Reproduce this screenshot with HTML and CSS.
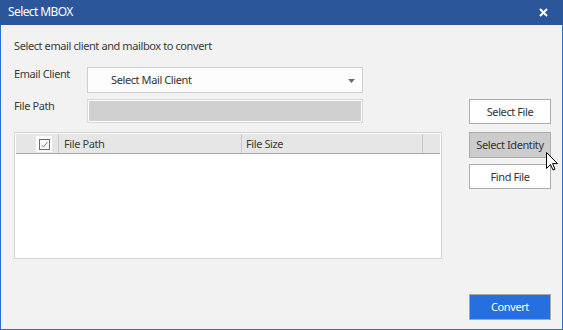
FILE: index.html
```html
<!DOCTYPE html>
<html>
<head>
<meta charset="utf-8">
<link rel="stylesheet" href="styles.css">
</head>
<body>
<div class="win">
  <div class="titlebar">
    <span class="title">Select MBOX</span>
    <svg class="close" width="9" height="9" viewBox="0 0 9 9"><path d="M1 1 L8 8 M8 1 L1 8" stroke="#fff" stroke-width="2" fill="none"/></svg>
  </div>
  <div class="content">
    <div class="left">
      <div class="intro">Select email client and mailbox to convert</div>
      <div class="row row-client">
        <div class="label">Email Client</div>
        <div class="combo">
          <span class="combo-text">Select Mail Client</span>
          <svg class="arrow" width="7" height="4" viewBox="0 0 7 4"><path d="M0 0 H7 L3.5 4 Z" fill="#6d6d6d"/></svg>
        </div>
      </div>
      <div class="row row-path">
        <div class="label">File Path</div>
        <div class="pathbox"><div class="pathfill"></div></div>
      </div>
      <div class="table">
        <div class="thead">
          <div class="th th-check"><span class="chkbg"><svg width="11" height="11" viewBox="0 0 11 11"><rect x="0.5" y="0.5" width="10" height="10" fill="#fff" stroke="#6b6b6b"/><path d="M2.5 6 L4.5 8 L8.5 3" stroke="#7a7a7a" stroke-width="1" fill="none"/></svg></span></div>
          <div class="th th-path">File Path</div>
          <div class="th th-size">File Size</div>
          <div class="th th-rest"></div>
        </div>
      </div>
    </div>
    <div class="right">
      <div class="btn">Select File</div>
      <div class="btn btn-hover">Select Identity</div>
      <div class="btn">Find File</div>
      <div class="btn btn-primary">Convert</div>
    </div>
    <svg class="cursor" width="12" height="19" viewBox="0 0 12 19"><path d="M0.5 0.5 L0.5 16.5 L4.5 12.5 L7 18 L9 17.2 L6.6 11.6 L11.5 11.6 Z" fill="#fff" stroke="#000" stroke-width="1" stroke-linejoin="miter"/></svg>
  </div>
</div>
</body>
</html>
```
FILE: styles.css
```css
* { box-sizing: border-box; }
html, body { margin: 0; padding: 0; }
body {
  width: 563px;
  height: 330px;
  overflow: hidden;
  font-family: "Noto Sans", "Open Sans", sans-serif;
  font-size: 11px;
  letter-spacing: -0.4px;
  color: #3a3a3a;
}
.win {
  width: 563px;
  height: 330px;
  display: flex;
  flex-direction: column;
  background: #f2f2f2;
  border: 1px solid #2a6fd0;
  border-top: none;
}
.titlebar {
  height: 25px;
  margin: 0 -1px;
  background: #2b579a;
  display: flex;
  align-items: center;
  justify-content: space-between;
  padding: 0 15px 0 8px;
  flex-shrink: 0;
}
.title {
  color: #fff;
  font-size: 12px;
  letter-spacing: -0.6px;
  line-height: 16px;
  margin-top: -1px;
}
.content {
  flex: 1;
  display: flex;
  position: relative;
  padding: 13px 11px 9px 13px;
}
.left {
  width: 428px;
  display: flex;
  flex-direction: column;
}
.intro {
  line-height: 16px;
  height: 16px;
}
.row {
  display: flex;
  align-items: flex-start;
}
.row-client { margin-top: 13px; height: 26px; }
.row-path { margin-top: 6px; height: 24px; }
.label {
  width: 73px;
  line-height: 14px;
}
.combo {
  width: 276px;
  height: 26px;
  background: #fdfdfd;
  border: 1px solid #cfcfcf;
  display: flex;
  align-items: center;
  justify-content: space-between;
  padding: 0 7px 0 23px;
}
.combo-text { line-height: 14px; color: #333; }
.arrow { margin-top: 1px; }
.pathbox {
  width: 276px;
  height: 24px;
  border: 1px solid #d9d9d9;
  background: #fff;
  padding: 1px;
}
.pathfill { width: 100%; height: 100%; background: #d0d0d0; }
.table {
  margin-top: 9px;
  width: 428px;
  height: 127px;
  border: 1px solid #d4d4d4;
  background: #fff;
  padding: 1px;
}
.thead {
  height: 20px;
  background: #e6e6e6;
  border-bottom: 1px solid #a6a6a6;
  display: flex;
}
.th {
  height: 19px;
  line-height: 19px;
  border-right: 1px solid #c9c9c9;
  color: #3d3d3d;
}
.th-check { width: 43px; padding: 2px 0 0 20px; }
.chkbg {
  display: flex;
  width: 16px;
  height: 16px;
  background: #fff;
  align-items: center;
  justify-content: center;
}
.th-path { width: 183px; padding-left: 5px; }
.th-size { width: 181px; padding-left: 4px; }
.th-rest { flex: 1; border-right: none; }
.right {
  width: 82px;
  margin-left: 27px;
  margin-top: 61px;
  display: flex;
  flex-direction: column;
}
.btn {
  height: 25px;
  border: 1px solid #adadad;
  background: #fff;
  display: flex;
  align-items: center;
  justify-content: center;
  color: #333;
  line-height: 14px;
  margin-bottom: 7px;
}
.btn:first-child { margin-bottom: 8px; }
.btn-hover { background: #cccccc; height: 26px; margin-bottom: 6px; }
.btn-primary {
  margin-top: auto;
  margin-bottom: 0;
  height: 26px;
  background: #2570de;
  border-color: #a8a8a8;
  color: #fff;
}
.cursor {
  position: absolute;
  left: 545px;
  top: 127px;
}
```
